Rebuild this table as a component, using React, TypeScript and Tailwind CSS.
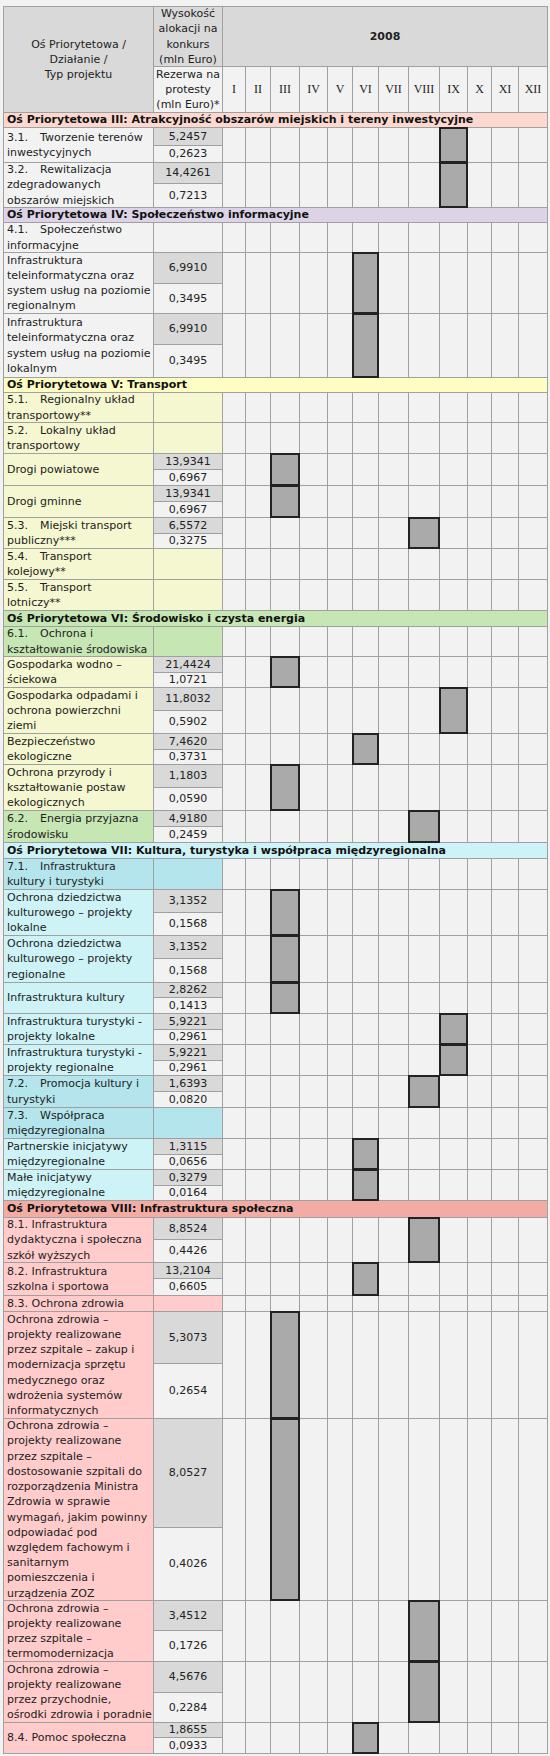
import React from "react";

const MONTHS = ["I", "II", "III", "IV", "V", "VI", "VII", "VIII", "IX", "X", "XI", "XII"];

type Item = {
  no?: string;
  name: string[];
  alloc?: string;
  res?: string;
  m?: number;
  bg: string;
  // cell heights of the sub-rows, and of the name cell that spans them
  h: string[];
  nh: string;
};

type Section = { title: string; bg: string; h: string; items: Item[] };

const GRAY = "bg-[#f2f2f2]";
const YEL = "bg-[#f4f7d0]";
const GREEN = "bg-[#c6e6b3]";
const CYAN = "bg-[#b4e5ec]";
const LCYAN = "bg-[#cdf3f7]";
const PINK = "bg-[#ffcccb]";

const oz = "Ochrona zdrowia –";
const pr = "projekty realizowane";

const SECTIONS: Section[] = [
  {
    title: "Oś Priorytetowa III: Atrakcyjność obszarów miejskich i tereny inwestycyjne",
    bg: "bg-[#fdd8cf]",
    h: "h-[14px]",
    items: [
      { no: "3.1.", name: ["Tworzenie terenów", "inwestycyjnych"], alloc: "5,2457", res: "0,2623", m: 8, bg: GRAY, h: ["h-[17px]", "h-[16px]"], nh: "h-[34px]" },
      { no: "3.2.", name: ["Rewitalizacja", "zdegradowanych", "obszarów miejskich"], alloc: "14,4261", res: "0,7213", m: 8, bg: GRAY, h: ["h-[20px]", "h-[23px]"], nh: "h-[44px]" },
    ],
  },
  {
    title: "Oś Priorytetowa IV: Społeczeństwo informacyjne",
    bg: "bg-[#dcd4e6]",
    h: "h-[14px]",
    items: [
      { no: "4.1.", name: ["Społeczeństwo", "informacyjne"], bg: GRAY, h: ["h-[29px]"], nh: "h-[29px]" },
      { name: ["Infrastruktura", "teleinformatyczna oraz", "system usług na poziomie", "regionalnym"], alloc: "6,9910", res: "0,3495", m: 5, bg: GRAY, h: ["h-[30px]", "h-[29px]"], nh: "h-[60px]" },
      { name: ["Infrastruktura", "teleinformatyczna oraz", "system usług na poziomie", "lokalnym"], alloc: "6,9910", res: "0,3495", m: 5, bg: GRAY, h: ["h-[30px]", "h-[32px]"], nh: "h-[63px]" },
    ],
  },
  {
    title: "Oś Priorytetowa V: Transport",
    bg: "bg-[#fefec4]",
    h: "h-[14px]",
    items: [
      { no: "5.1.", name: ["Regionalny układ", "transportowy**"], bg: YEL, h: ["h-[29px]"], nh: "h-[29px]" },
      { no: "5.2.", name: ["Lokalny układ", "transportowy"], bg: YEL, h: ["h-[30px]"], nh: "h-[30px]" },
      { name: ["Drogi powiatowe"], alloc: "13,9341", res: "0,6967", m: 2, bg: YEL, h: ["h-[15px]", "h-[15px]"], nh: "h-[31px]" },
      { name: ["Drogi gminne"], alloc: "13,9341", res: "0,6967", m: 2, bg: YEL, h: ["h-[15px]", "h-[15px]"], nh: "h-[31px]" },
      { no: "5.3.", name: ["Miejski transport", "publiczny***"], alloc: "6,5572", res: "0,3275", m: 7, bg: YEL, h: ["h-[15px]", "h-[14px]"], nh: "h-[30px]" },
      { no: "5.4.", name: ["Transport", "kolejowy**"], bg: YEL, h: ["h-[30px]"], nh: "h-[30px]" },
      { no: "5.5.", name: ["Transport", "lotniczy**"], bg: YEL, h: ["h-[30px]"], nh: "h-[30px]" },
    ],
  },
  {
    title: "Oś Priorytetowa VI: Środowisko i czysta energia",
    bg: "bg-[#c6e6b3]",
    h: "h-[15px]",
    items: [
      { no: "6.1.", name: ["Ochrona i", "kształtowanie środowiska"], bg: GREEN, h: ["h-[29px]"], nh: "h-[29px]" },
      { name: ["Gospodarka wodno –", "ściekowa"], alloc: "21,4424", res: "1,0721", m: 2, bg: YEL, h: ["h-[15px]", "h-[14px]"], nh: "h-[30px]" },
      { name: ["Gospodarka odpadami i", "ochrona powierzchni", "ziemi"], alloc: "11,8032", res: "0,5902", m: 8, bg: YEL, h: ["h-[22px]", "h-[22px]"], nh: "h-[45px]" },
      { name: ["Bezpieczeństwo", "ekologiczne"], alloc: "7,4620", res: "0,3731", m: 5, bg: YEL, h: ["h-[15px]", "h-[14px]"], nh: "h-[30px]" },
      { name: ["Ochrona przyrody i", "kształtowanie postaw", "ekologicznych"], alloc: "1,1803", res: "0,0590", m: 2, bg: YEL, h: ["h-[22px]", "h-[22px]"], nh: "h-[45px]" },
      { no: "6.2.", name: ["Energia przyjazna", "środowisku"], alloc: "4,9180", res: "0,2459", m: 7, bg: GREEN, h: ["h-[15px]", "h-[15px]"], nh: "h-[31px]" },
    ],
  },
  {
    title: "Oś Priorytetowa VII: Kultura, turystyka i współpraca międzyregionalna",
    bg: "bg-[#cdf3f7]",
    h: "h-[15px]",
    items: [
      { no: "7.1.", name: ["Infrastruktura", "kultury i turystyki"], bg: CYAN, h: ["h-[30px]"], nh: "h-[30px]" },
      { name: ["Ochrona dziedzictwa", "kulturowego – projekty", "lokalne"], alloc: "3,1352", res: "0,1568", m: 2, bg: LCYAN, h: ["h-[22px]", "h-[22px]"], nh: "h-[45px]" },
      { name: ["Ochrona dziedzictwa", "kulturowego – projekty", "regionalne"], alloc: "3,1352", res: "0,1568", m: 2, bg: LCYAN, h: ["h-[22px]", "h-[23px]"], nh: "h-[46px]" },
      { name: ["Infrastruktura kultury"], alloc: "2,8262", res: "0,1413", m: 2, bg: LCYAN, h: ["h-[14px]", "h-[15px]"], nh: "h-[30px]" },
      { name: ["Infrastruktura turystyki -", "projekty lokalne"], alloc: "5,9221", res: "0,2961", m: 8, bg: LCYAN, h: ["h-[15px]", "h-[14px]"], nh: "h-[30px]" },
      { name: ["Infrastruktura turystyki -", "projekty regionalne"], alloc: "5,9221", res: "0,2961", m: 8, bg: LCYAN, h: ["h-[15px]", "h-[14px]"], nh: "h-[30px]" },
      { no: "7.2.", name: ["Promocja kultury i", "turystyki"], alloc: "1,6393", res: "0,0820", m: 7, bg: CYAN, h: ["h-[15px]", "h-[15px]"], nh: "h-[31px]" },
      { no: "7.3.", name: ["Współpraca", "międzyregionalna"], bg: CYAN, h: ["h-[30px]"], nh: "h-[30px]" },
      { name: ["Partnerskie inicjatywy", "międzyregionalne"], alloc: "1,3115", res: "0,0656", m: 5, bg: LCYAN, h: ["h-[15px]", "h-[14px]"], nh: "h-[30px]" },
      { name: ["Małe inicjatywy", "międzyregionalne"], alloc: "0,3279", res: "0,0164", m: 5, bg: LCYAN, h: ["h-[15px]", "h-[14px]"], nh: "h-[30px]" },
    ],
  },
  {
    title: "Oś Priorytetowa VIII: Infrastruktura społeczna",
    bg: "bg-[#f2aca4]",
    h: "h-[16px]",
    items: [
      { name: ["8.1. Infrastruktura", "dydaktyczna i społeczna", "szkół wyższych"], alloc: "8,8524", res: "0,4426", m: 7, bg: PINK, h: ["h-[21px]", "h-[22px]"], nh: "h-[44px]" },
      { name: ["8.2. Infrastruktura", "szkolna i sportowa"], alloc: "13,2104", res: "0,6605", m: 5, bg: PINK, h: ["h-[15px]", "h-[16px]"], nh: "h-[32px]" },
      { name: ["8.3. Ochrona zdrowia"], bg: PINK, h: ["h-[15px]"], nh: "h-[15px]" },
      {
        name: [oz, pr, "przez szpitale – zakup i", "modernizacja sprzętu", "medycznego oraz", "wdrożenia systemów", "informatycznych"],
        alloc: "5,3073", res: "0,2654", m: 2, bg: PINK, h: ["h-[51px]", "h-[54px]"], nh: "h-[106px]",
      },
      {
        name: [
          oz, pr, "przez szpitale –", "dostosowanie szpitali do", "rozporządzenia Ministra", "Zdrowia w sprawie",
          "wymagań, jakim powinny", "odpowiadać pod", "względem fachowym i", "sanitarnym", "pomieszczenia i", "urządzenia ZOZ",
        ],
        alloc: "8,0527", res: "0,4026", m: 2, bg: PINK, h: ["h-[108px]", "h-[72px]"], nh: "h-[181px]",
      },
      { name: [oz, pr, "przez szpitale –", "termomodernizacja"], alloc: "3,4512", res: "0,1726", m: 7, bg: PINK, h: ["h-[29px]", "h-[30px]"], nh: "h-[60px]" },
      { name: [oz, pr, "przez przychodnie,", "ośrodki zdrowia i poradnie"], alloc: "4,5676", res: "0,2284", m: 7, bg: PINK, h: ["h-[30px]", "h-[29px]"], nh: "h-[60px]" },
      { name: ["8.4. Pomoc społeczna"], alloc: "1,8655", res: "0,0933", m: 5, bg: PINK, h: ["h-[14px]", "h-[15px]"], nh: "h-[30px]" },
    ],
  },
];

const center = "flex items-center justify-center";
const block = "relative z-[1] bg-[#aaaaaa] outline-2 -outline-offset-1 outline-[#222222]";

function ItemCells({ item }: { item: Item }) {
  const two = item.h.length === 2;
  return (
    <>
      <div
        className={`${two ? "row-span-2" : ""} ${item.bg} ${item.nh} flex flex-col justify-center overflow-visible whitespace-nowrap pl-[3px]`}
      >
        {item.name.map((line, i) => (
          <div key={i}>
            {i === 0 && item.no && <span className="inline-block w-[33px]">{item.no}</span>}
            {line}
          </div>
        ))}
      </div>
      <div className={`${item.h[0]} ${item.alloc ? "bg-[#d9d9d9]" : item.bg} ${center}`}>{item.alloc}</div>
      {MONTHS.map((mo, i) => (
        <div key={mo} className={`${two ? "row-span-2" : ""} ${i === item.m ? block : "bg-[#f2f2f2]"}`} />
      ))}
      {two && <div className={`${item.h[1]} bg-[#f2f2f2] ${center}`}>{item.res}</div>}
    </>
  );
}

export default function App() {
  return (
    <div className="min-h-[1756px] bg-[#f2f2f2] pl-[3px] pt-[6px] font-['DejaVu_Sans',sans-serif] text-[11px] leading-[15.2px] text-[#222222]">
      <div className="grid w-fit grid-cols-[149px_68px_22px_24px_28px_27px_24px_25px_29px_30px_27px_23px_26px_28px] gap-px bg-[#a0a0a0] p-px">
        <div className={`row-span-2 h-[105px] bg-[#d9d9d9] text-center ${center}`}>
          <div>
            Oś Priorytetowa /<br />
            Działanie /<br />
            Typ projektu
          </div>
        </div>
        <div className={`h-[59px] bg-[#d9d9d9] text-center ${center}`}>
          <div>
            Wysokość
            <br />
            alokacji na
            <br />
            konkurs
            <br />
            (mln Euro)
          </div>
        </div>
        <div className={`col-span-12 h-[59px] bg-[#d9d9d9] font-bold ${center}`}>2008</div>
        <div className={`h-[45px] bg-[#f2f2f2] text-center ${center}`}>
          <div>
            Rezerwa na
            <br />
            protesty
            <br />
            (mln Euro)*
          </div>
        </div>
        {MONTHS.map((mo) => (
          <div key={mo} className={`h-[45px] bg-[#f2f2f2] font-['Liberation_Serif',serif] text-[12px] ${center}`}>
            {mo}
          </div>
        ))}

        {SECTIONS.map((s) => (
          <React.Fragment key={s.title}>
            <div className={`col-span-14 ${s.h} ${s.bg} flex items-center whitespace-nowrap pl-[3px] font-bold text-[#111111]`}>
              {s.title}
            </div>
            {s.items.map((it, i) => (
              <ItemCells key={i} item={it} />
            ))}
          </React.Fragment>
        ))}
      </div>
    </div>
  );
}
